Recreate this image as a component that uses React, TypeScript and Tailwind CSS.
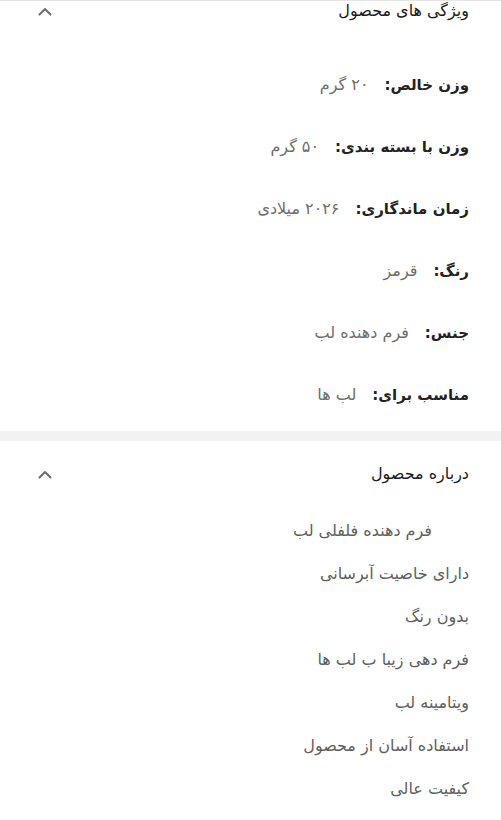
import React from "react";

const specs: [string, string][] = [
  ["وزن خالص:", "۲۰ گرم"],
  ["وزن با بسته بندی:", "۵۰ گرم"],
  ["زمان ماندگاری:", "۲۰۲۶ میلادی"],
  ["رنگ:", "قرمز"],
  ["جنس:", "فرم دهنده لب"],
  ["مناسب برای:", "لب ها"],
];

const about = [
  "فرم دهنده فلفلی لب",
  "دارای خاصیت آبرسانی",
  "بدون رنگ",
  "فرم دهی زیبا ب لب ها",
  "ویتامینه لب",
  "استفاده آسان از محصول",
  "کیفیت عالی",
];

function Chevron() {
  return (
    <svg width="14" height="9" viewBox="0 0 14 9" fill="none" className="text-[#6b6b6b]">
      <path d="M1.5 7.5L7 2L12.5 7.5" stroke="currentColor" strokeWidth="2" strokeLinecap="round" strokeLinejoin="round" />
    </svg>
  );
}

export default function App() {
  return (
    <div dir="rtl" className="w-[501px] h-[820px] bg-white overflow-hidden" style={{ fontFamily: '"DejaVu Sans", "Noto Sans", sans-serif' }}>
      <div className="border-t border-[#e5e5e5]">
        <div className="flex items-center justify-between h-[22px] pr-[32px] pl-[38px] -mt-[1px]">
          <span className="text-[16px] text-[#1a1a1a]">ویژگی های محصول</span>
          <Chevron />
        </div>
        <div className="mt-[32px] pr-[32px]">
          {specs.map(([k, v]) => (
            <div key={k} className="h-[62px] flex items-center gap-[16px]">
              <span className="text-[15px] font-bold text-[#222]">{k}</span>
              <span className="text-[16px] text-[#6e6e6e]">{v}</span>
            </div>
          ))}
        </div>
      </div>
      <div className="h-[10px] bg-[#f2f2f2] mt-[5px]" />
      <div>
        <div className="flex items-center justify-between h-[22px] pr-[32px] pl-[38px] mt-[22px]">
          <span className="text-[16px] text-[#1a1a1a]">درباره محصول</span>
          <Chevron />
        </div>
        <div className="mt-[24px] pr-[32px]">
          {about.map((t, i) => (
            <div key={t} className={"h-[43px] flex items-center text-[16px] text-[#5e5e5e] " + (i === 0 ? "pr-[37px]" : "")}>
              {t}
            </div>
          ))}
        </div>
      </div>
    </div>
  );
}
